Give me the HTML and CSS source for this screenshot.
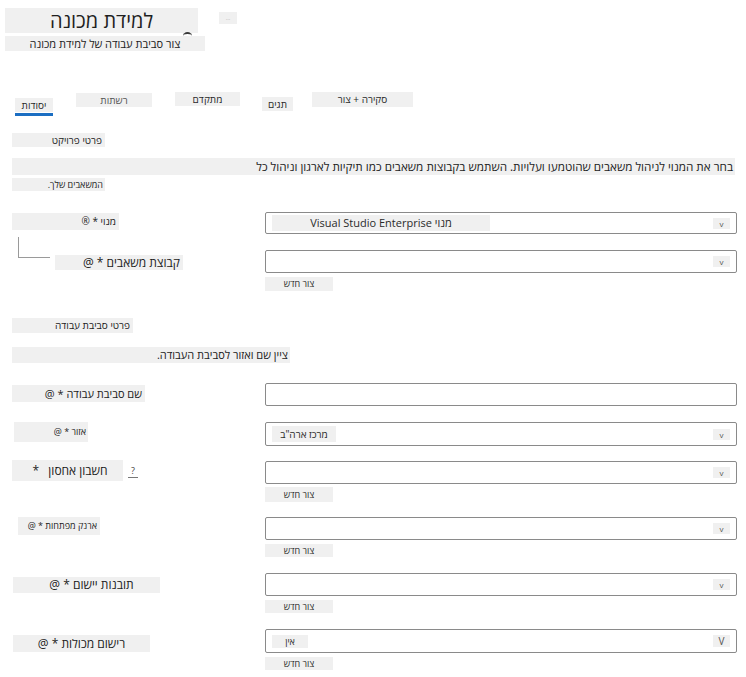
FILE: index.html
```html
<!DOCTYPE html>
<html lang="he">
<head>
<meta charset="utf-8">
<title>למידת מכונה</title>
<link rel="stylesheet" href="styles.css">
</head>
<body>
<div class="page">
  <header class="header">
    <div class="title-row">
      <h1 class="title" dir="rtl">למידת מכונה</h1>
      <button class="more" type="button">...</button>
    </div>
    <p class="subtitle" dir="rtl">צור סביבת עבודה של למידת מכונה</p>
  </header>

  <nav class="tabs">
    <div class="tab tab-1 active"><span class="tab-label" dir="rtl">יסודות</span></div>
    <div class="tab tab-2"><span class="tab-label" dir="rtl">רשתות</span></div>
    <div class="tab tab-3"><span class="tab-label" dir="rtl">מתקדם</span></div>
    <div class="tab tab-4"><span class="tab-label" dir="rtl">תגים</span></div>
    <div class="tab tab-5"><span class="tab-label" dir="rtl">סקירה + צור</span></div>
  </nav>

  <main class="content">
    <h2 class="section-title st-project" dir="rtl">פרטי פרויקט</h2>
    <p class="desc desc-long" dir="rtl">בחר את המנוי לניהול משאבים שהוטמעו ועלויות. השתמש בקבוצות משאבים כמו תיקיות לארגון וניהול כל</p>
    <p class="desc desc-tail" dir="rtl">המשאבים שלך.</p>

    <div class="field f-sub">
      <div class="field-label">
        <span class="chip lbl-sub" dir="rtl">מנוי * ®</span>
      </div>
      <div class="field-control">
        <div class="select h22">
          <span class="value val-sub" dir="rtl">מנוי Visual Studio Enterprise</span>
          <span class="chev">v</span>
        </div>
      </div>
    </div>

    <div class="field f-rg">
      <div class="field-label">
        <span class="connector"></span>
        <span class="chip lbl-rg" dir="rtl">קבוצת משאבים * @</span>
      </div>
      <div class="field-control">
        <div class="select h23">
          <span class="value"></span>
          <span class="chev">v</span>
        </div>
        <button class="create" type="button" dir="rtl">צור חדש</button>
      </div>
    </div>

    <h2 class="section-title st-ws" dir="rtl">פרטי סביבת עבודה</h2>
    <p class="desc desc-ws" dir="rtl">ציין שם ואזור לסביבת העבודה.</p>

    <div class="field f-name">
      <div class="field-label">
        <span class="chip lbl-name" dir="rtl">שם סביבת עבודה * @</span>
      </div>
      <div class="field-control">
        <div class="select input h23"></div>
      </div>
    </div>

    <div class="field f-region">
      <div class="field-label">
        <span class="chip lbl-region" dir="rtl">אזור * @</span>
      </div>
      <div class="field-control">
        <div class="select h24">
          <span class="value val-region" dir="rtl">מרכז ארה"ב</span>
          <span class="chev">v</span>
        </div>
      </div>
    </div>

    <div class="field f-storage">
      <div class="field-label">
        <span class="chip lbl-storage" dir="rtl">חשבון אחסון &nbsp;&nbsp;*</span>
        <span class="help">?</span>
      </div>
      <div class="field-control">
        <div class="select h23">
          <span class="value"></span>
          <span class="chev">v</span>
        </div>
        <button class="create c15" type="button" dir="rtl">צור חדש</button>
      </div>
    </div>

    <div class="field f-kv">
      <div class="field-label">
        <span class="chip lbl-kv" dir="rtl">ארנק מפתחות * @</span>
      </div>
      <div class="field-control">
        <div class="select h23">
          <span class="value"></span>
          <span class="chev">v</span>
        </div>
        <button class="create c13" type="button" dir="rtl">צור חדש</button>
      </div>
    </div>

    <div class="field f-ai">
      <div class="field-label">
        <span class="chip lbl-ai" dir="rtl">תובנות יישום * @</span>
      </div>
      <div class="field-control">
        <div class="select h23">
          <span class="value"></span>
          <span class="chev">v</span>
        </div>
        <button class="create c13" type="button" dir="rtl">צור חדש</button>
      </div>
    </div>

    <div class="field f-cr">
      <div class="field-label">
        <span class="chip lbl-cr" dir="rtl">רישום מכולות * @</span>
      </div>
      <div class="field-control">
        <div class="select h24">
          <span class="value val-none" dir="rtl">אין</span>
          <span class="chev chev-big">V</span>
        </div>
        <button class="create c13" type="button" dir="rtl">צור חדש</button>
      </div>
    </div>
  </main>
</div>
</body>
</html>
```

FILE: styles.css
```css
* { box-sizing: border-box; }

html, body {
  margin: 0;
  padding: 0;
  background: #ffffff;
}

body {
  font-family: "Open Sans", "Liberation Sans", "DejaVu Sans", sans-serif;
  color: #222222;
}

.page {
  width: 746px;
  height: 677px;
  overflow: hidden;
}

/* ---------- header ---------- */
.header {
  padding: 8px 0 0 5px;
}

.title-row {
  display: flex;
  align-items: flex-start;
}

.title {
  position: relative;
  margin: 0;
  width: 193px;
  height: 25px;
  line-height: 25px;
  font-size: 20px;
  font-weight: 400;
  text-align: center;
  background: #f0f0f0;
  color: #1f1f1f;
}

.title::after {
  content: "";
  position: absolute;
  left: 178px;
  top: 24px;
  width: 9px;
  height: 6px;
  border-radius: 50% 50% 0 0;
  border-top: 2px solid #3a3a3a;
}

.more {
  margin: 4px 0 0 21px;
  width: 18px;
  height: 12px;
  padding: 0;
  border: none;
  background: #f0f0f0;
  color: #b0b0b0;
  font-size: 6px;
  line-height: 12px;
  font-family: inherit;
}

.subtitle {
  margin: 3px 0 0;
  width: 200px;
  height: 15px;
  line-height: 15px;
  font-size: 11px;
  text-align: center;
  background: #f0f0f0;
}

/* ---------- tabs ---------- */
.tabs {
  display: flex;
  align-items: flex-start;
  margin-top: 41px;
  height: 24px;
}

.tab-label {
  display: block;
  height: 14px;
  line-height: 14px;
  font-size: 10px;
  text-align: center;
  background: #f0f0f0;
  color: #2a2a2a;
}

.tab-1 { margin: 6px 0 0 15px; width: 38px; }
.tab-2 { margin: 1px 0 0 23px; width: 76px; }
.tab-3 { margin: 0 0 0 23px; width: 65px; }
.tab-4 { margin: 5px 0 0 22px; width: 31px; }
.tab-5 { margin: 0 0 0 19px; width: 101px; }
.tab-5 .tab-label { height: 15px; line-height: 15px; }
.tab-2 .tab-label { color: #555555; }

.tab.active {
  padding-bottom: 1px;
  border-bottom: 3px solid #1b6ec2;
}

/* ---------- content ---------- */
.content {
  padding: 0 9px 0 12px;
}

.section-title {
  margin: 0;
  font-weight: 400;
  font-size: 10px;
  text-align: right;
  padding-right: 3px;
  background: #f0f0f0;
}

.st-project { margin-top: 17px; width: 93px; height: 14px; line-height: 14px; }
.st-ws { margin-top: 27px; width: 121px; height: 15px; line-height: 15px; }

.desc {
  margin: 0;
  text-align: right;
  background: #f0f0f0;
  padding-right: 2px;
}

.desc-long { margin-top: 11px; width: 723px; height: 17px; line-height: 17px; font-size: 11.7px; }
.desc-tail { margin-top: 3px; width: 93px; height: 13px; line-height: 13px; font-size: 9px; }
.desc-ws { margin-top: 14px; width: 278px; height: 16px; line-height: 16px; font-size: 11px; }

/* ---------- fields ---------- */
.field {
  display: flex;
  align-items: flex-start;
}

.field-label {
  width: 253px;
  display: flex;
  align-items: flex-start;
}

.field-control {
  width: 472px;
}

.f-sub { margin-top: 21px; }
.f-rg { margin-top: 16px; }
.f-name { margin-top: 20px; }
.f-region { margin-top: 16px; }
.f-storage { margin-top: 15px; }
.f-kv { margin-top: 15px; }
.f-ai { margin-top: 16px; }
.f-cr { margin-top: 16px; }

.chip {
  display: block;
  background: #f0f0f0;
  color: #222222;
  white-space: nowrap;
}

.lbl-sub { margin-top: 1px; width: 107px; height: 17px; line-height: 17px; font-size: 10px; text-align: right; padding-right: 3px; }
.lbl-rg { margin: 5px 0 0 5px; width: 128px; height: 15px; line-height: 15px; font-size: 12px; text-align: right; padding-right: 3px; }
.lbl-name { margin-top: 2px; width: 133px; height: 17px; line-height: 17px; font-size: 11px; text-align: right; padding-right: 3px; }
.lbl-region { margin-left: 2px; width: 74px; height: 20px; line-height: 20px; font-size: 9px; text-align: right; padding-right: 2px; }
.lbl-storage { margin-top: -1px; width: 111px; height: 21px; line-height: 21px; font-size: 12px; text-align: center; padding-left: 5px; }
.lbl-kv { margin-left: 6px; width: 82px; height: 18px; line-height: 18px; font-size: 9px; text-align: right; padding-right: 3px; }
.lbl-ai { margin: 4px 0 0 1px; width: 147px; height: 16px; line-height: 16px; font-size: 12px; text-align: center; padding-left: 10px; }
.lbl-cr { margin: 6px 0 0 1px; width: 137px; height: 17px; line-height: 17px; font-size: 12px; text-align: center; }

.connector {
  display: block;
  margin: -13px 0 0 6px;
  width: 32px;
  height: 21px;
  border-left: 1px solid #9a9a9a;
  border-bottom: 1px solid #9a9a9a;
}

.help {
  margin: 4px 0 0 5px;
  width: 10px;
  height: 13px;
  line-height: 11px;
  font-size: 9px;
  text-align: center;
  color: #444444;
  border-bottom: 1px solid #777777;
}

.select {
  display: flex;
  align-items: center;
  justify-content: space-between;
  border: 1px solid #8a8a8a;
  border-radius: 2px;
  padding: 0 6px;
  background: #ffffff;
}

.h22 { height: 22px; }
.h23 { height: 23px; }
.h24 { height: 24px; }

.value {
  display: block;
  background: #f0f0f0;
  color: #2a2a2a;
  white-space: nowrap;
  text-align: center;
}

.val-sub { width: 218px; height: 16px; line-height: 16px; font-size: 11px; }
.val-region { width: 64px; height: 16px; line-height: 16px; font-size: 10px; }
.val-none { width: 36px; height: 13px; line-height: 13px; font-size: 9px; margin-top: 1px; }

.chev {
  display: block;
  width: 17px;
  height: 11px;
  line-height: 11px;
  font-size: 8px;
  text-align: center;
  color: #555555;
  background: #f0f0f0;
}

.chev-big {
  height: 12px;
  line-height: 12px;
  font-size: 10px;
}

.create {
  display: block;
  margin-top: 4px;
  width: 68px;
  height: 14px;
  padding: 0;
  border: none;
  background: #f0f0f0;
  color: #2a2a2a;
  font-family: inherit;
  font-size: 9px;
  line-height: 14px;
  text-align: center;
}

.c15 { margin-top: 3px; height: 15px; line-height: 15px; }
.c13 { height: 13px; line-height: 13px; }
```
